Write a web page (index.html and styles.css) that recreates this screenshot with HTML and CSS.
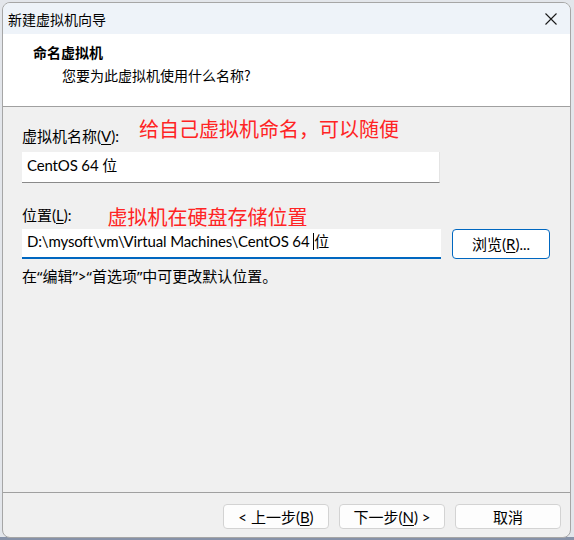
FILE: index.html
```html
<!DOCTYPE html>
<html lang="zh-CN">
<head>
<meta charset="utf-8">
<title>新建虚拟机向导</title>
<link rel="stylesheet" href="styles.css">
</head>
<body>
<div class="window">
  <div class="titlebar">
    <span class="title">新建虚拟机向导</span>
    <svg class="close" width="12" height="12" viewBox="0 0 12 12" aria-hidden="true">
      <path d="M0.5 0.5 L11.5 11.5 M11.5 0.5 L0.5 11.5" stroke="#1a1a1a" stroke-width="1.1" fill="none"/>
    </svg>
  </div>
  <div class="header">
    <div class="h-title">命名虚拟机</div>
    <div class="h-sub">您要为此虚拟机使用什么名称?</div>
  </div>
  <div class="content">
    <div class="field-row row1">
      <span class="label">虚拟机名称(<u>V</u>):</span>
      <span class="note note1">给自己虚拟机命名，可以随便</span>
    </div>
    <div class="input name-input">CentOS 64 位</div>
    <div class="field-row row2">
      <span class="label">位置(<u>L</u>):</span>
      <span class="note note2">虚拟机在硬盘存储位置</span>
    </div>
    <div class="loc-row">
      <div class="input loc-input">D:\mysoft\vm\Virtual Machines\CentOS 64 <span class="caret"></span>位</div>
      <button class="btn browse">浏览(<u>R</u>)...</button>
    </div>
    <div class="hint">在<span class="q">“</span>编辑<span class="q">”</span>&gt;<span class="q">“</span>首选项<span class="q">”</span>中可更改默认位置。</div>
  </div>
  <div class="footer">
    <button class="btn nav">&lt; 上一步(<u>B</u>)</button>
    <button class="btn nav">下一步(<u>N</u>) &gt;</button>
    <button class="btn nav">取消</button>
  </div>
</div>
</body>
</html>
```
FILE: styles.css
```css
html, body {
  margin: 0;
  padding: 0;
}
body {
  width: 574px;
  height: 540px;
  background: linear-gradient(to bottom, #e3e6eb 0, #e3e6eb 537px, #8792a8 537px);
  font-family: "Lato", "Noto Sans CJK SC", sans-serif;
  font-size: 15px;
  color: #000;
  overflow: hidden;
}
.window {
  box-sizing: border-box;
  margin: 2px 0 0 2px;
  width: 569px;
  height: 536px;
  border: 1px solid #a6a6a6;
  border-radius: 8px;
  overflow: hidden;
  display: flex;
  flex-direction: column;
  background: #f0f0f0;
}
.titlebar {
  height: 31px;
  flex: none;
  background: #eef3f9;
  display: flex;
  align-items: center;
  justify-content: space-between;
  padding: 0 13px 0 5px;
}
.title {
  font-size: 14px;
  line-height: 20px;
  font-family: "Noto Sans CJK SC", sans-serif;
}
.close {
  display: block;
  margin-top: 1px;
}
.header {
  height: 72px;
  flex: none;
  background: #fff;
  border-bottom: 1px solid #a0a0a0;
  box-sizing: content-box;
  padding: 0;
}
.h-title {
  font-family: "Noto Sans CJK SC", sans-serif;
  font-weight: bold;
  font-size: 14px;
  line-height: 20px;
  padding: 8px 0 0 30px;
}
.h-sub {
  font-family: "Noto Sans CJK SC", sans-serif;
  font-size: 14px;
  line-height: 20px;
  padding-left: 59px;
  margin-top: 3px;
}
.content {
  flex: 1;
  display: flex;
  flex-direction: column;
  align-items: flex-start;
  padding: 9px 0 0 19px;
}
.field-row {
  display: flex;
  align-items: flex-start;
}
.label {
  line-height: 20px;
}
.label u, .btn u {
  text-underline-offset: 2px;
}
.note {
  font-family: "Noto Sans CJK SC", sans-serif;
  font-size: 20px;
  color: #ff2424;
}
.row1 .label {
  margin-top: 10px;
}
.note1 {
  line-height: 26px;
  margin-left: 20px;
}
.row2 {
  margin-top: 22px;
}
.note2 {
  line-height: 24px;
  margin-left: 36px;
}
.input {
  box-sizing: border-box;
  background: #fff;
  line-height: 20px;
  padding-left: 5px;
  white-space: nowrap;
  letter-spacing: -0.15px;
}
.name-input {
  margin-top: 6px;
  width: 418px;
  height: 31px;
  padding-top: 3px;
  border-right: 1px solid #e4e4e4;
  border-bottom: 1px solid #8a8a8a;
}
.loc-row {
  display: flex;
  gap: 11px;
  align-items: flex-start;
}
.loc-input {
  width: 419px;
  height: 30px;
  padding-top: 2px;
  border-bottom: 2px solid #0067c0;
}
.caret {
  display: inline-block;
  width: 1px;
  height: 17px;
  background: #000;
  vertical-align: -3px;
}
.btn {
  font-family: "Lato", "Noto Sans CJK SC", sans-serif;
  font-size: 15px;
  color: #000;
  background: #fdfdfd;
  border: 1px solid #d3d3d3;
  border-radius: 4px;
  padding: 0;
  line-height: 20px;
}
.browse {
  width: 98px;
  height: 30px;
  border: 1.5px solid #0067c0;
  background: #fff;
}
.hint {
  margin-top: 7px;
  line-height: 20px;
}
.q {
  font-family: "Noto Sans", sans-serif;
}
.footer {
  flex: none;
  height: 45px;
  box-sizing: border-box;
  border-top: 1px solid #a0a0a0;
  display: flex;
  justify-content: flex-end;
  align-items: flex-start;
  gap: 10px;
  padding: 11px 9px 0 0;
}
.nav {
  width: 106px;
  height: 25px;
}
```
